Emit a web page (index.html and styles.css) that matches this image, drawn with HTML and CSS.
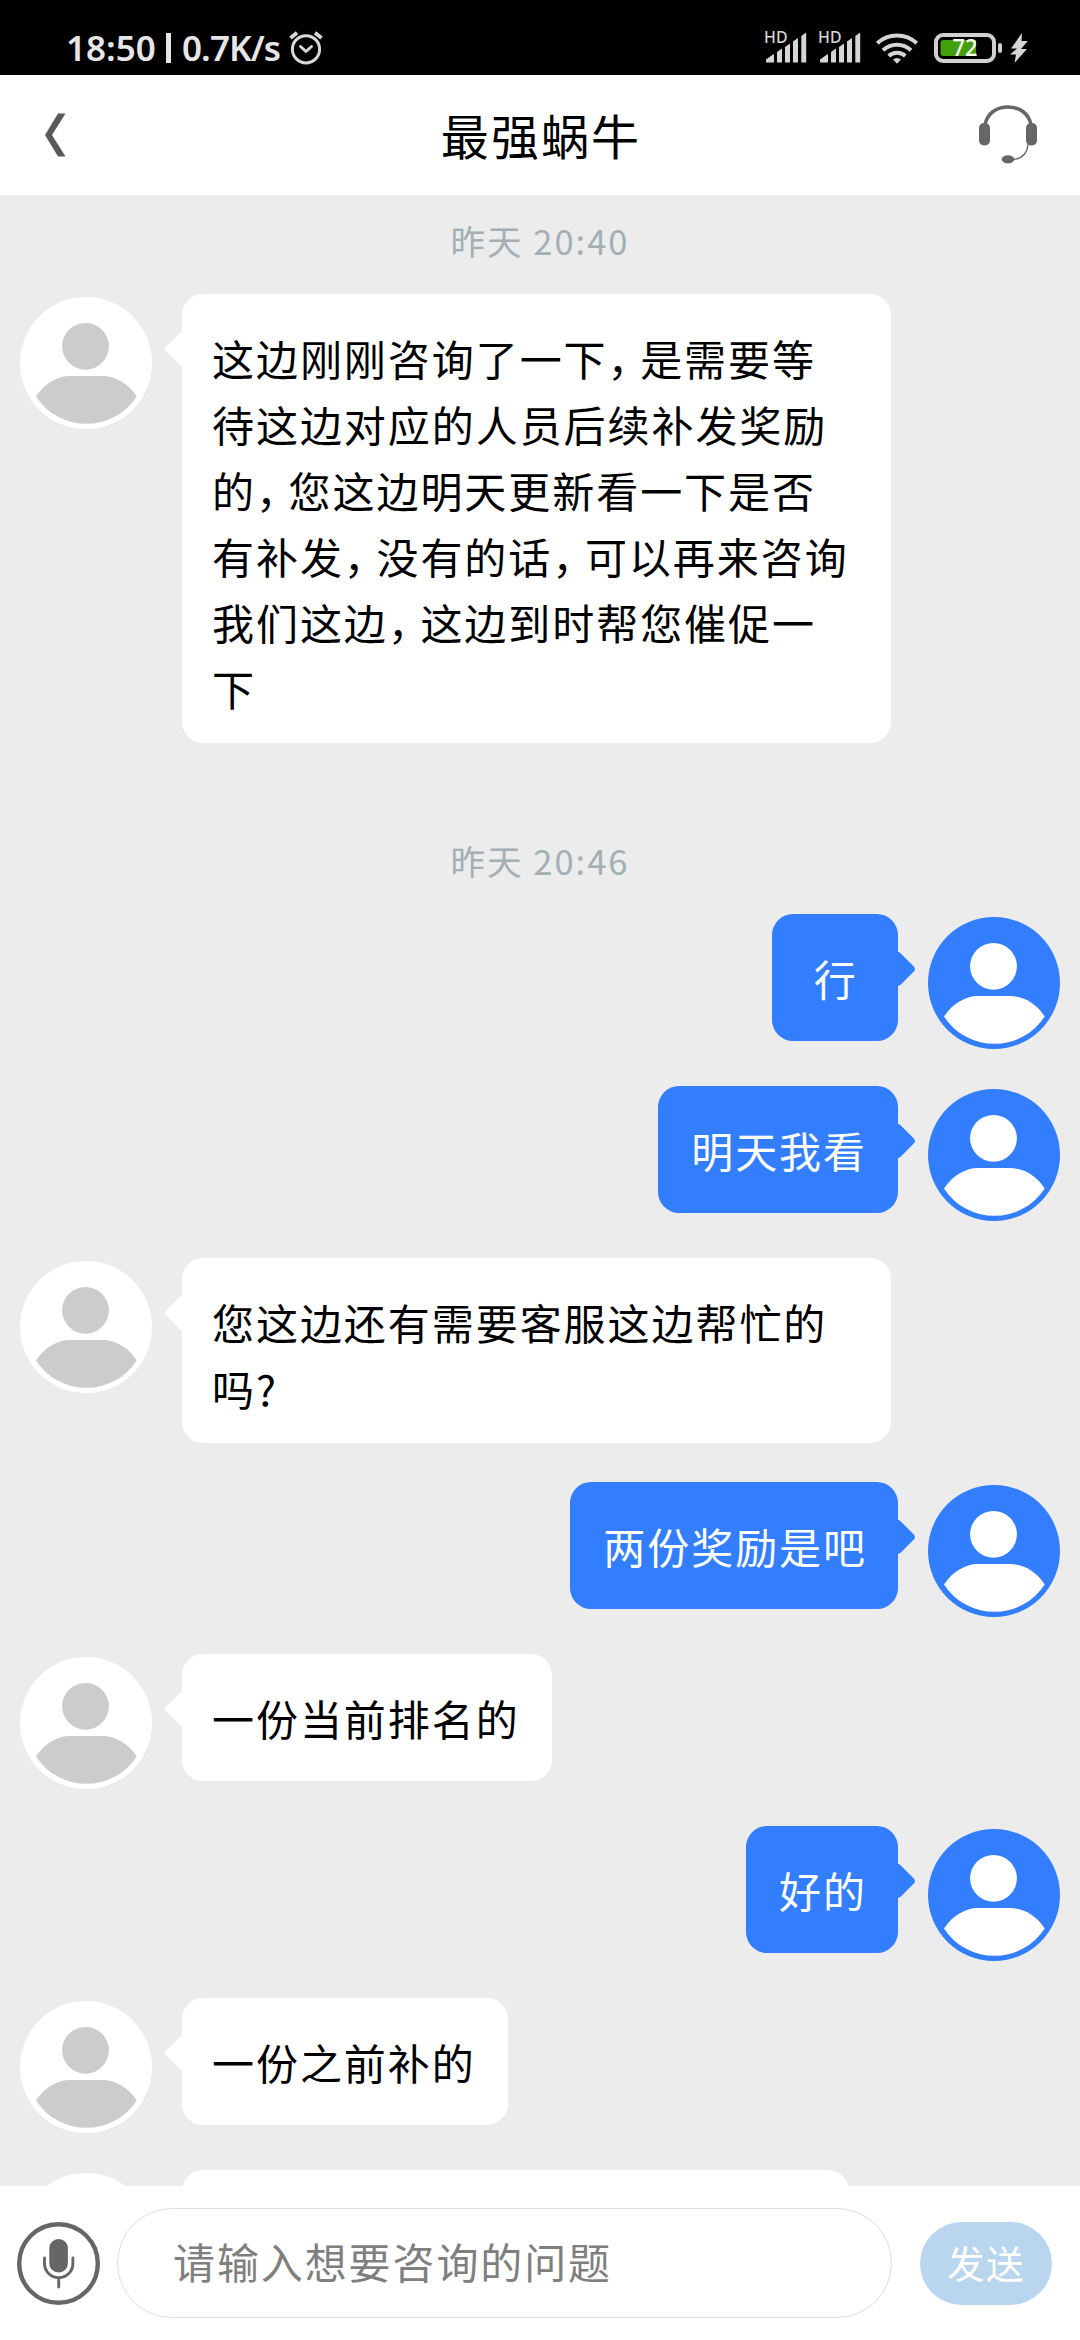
FILE: index.html
```html
<!DOCTYPE html>
<html lang="zh-CN">
<head>
<meta charset="utf-8">
<title>最强蜗牛</title>
<link rel="stylesheet" href="styles.css">
</head>
<body>
<svg class="defs" aria-hidden="true">
  <symbol id="person" viewBox="0 0 132 132">
    <circle cx="65.5" cy="49.3" r="23.4"/>
    <path d="M16 99.5C25 86 38 79 50 79H82C95 79 108 86 116.7 99.5A60 60 0 0 1 16 99.5Z"/>
  </symbol>
</svg>
<div class="screen">
  <div class="status">
    <span class="clock">18:50</span><span class="bar"></span><span class="speed">0.7K/s</span>
    <svg class="alarm" width="36" height="36" viewBox="0 0 36 36" fill="none" stroke="#d8d8d8" stroke-width="3" stroke-linecap="round" stroke-linejoin="round">
      <circle cx="18" cy="19.300" r="13.600"/><path d="M12.500 16.500L18 21.500L23.500 16.500"/><path d="M2.500 8L9 2.800M27 2.800L33.500 8" stroke-width="3.800" stroke-linecap="butt"/>
    </svg>
    <div class="icons">
      <svg class="sig" width="42" height="34" viewBox="0 0 42 34">
        <text x="-1" y="11.8" font-size="15.5" font-weight="500" textLength="23.500" lengthAdjust="spacingAndGlyphs">HD</text>
        <path d="M1 31.500V28.500L8 23.500H9V31.500ZM12 31.500V21L17 17.500V31.500ZM20 31.500V16L25 12.500V31.500ZM28 31.500V10.500L33 7V31.500ZM36.300 31.500V5L41.200 1.500V31.500Z"/>
      </svg>
      <svg class="sig" width="42" height="34" viewBox="0 0 42 34">
        <text x="-1" y="11.8" font-size="15.5" font-weight="500" textLength="23.500" lengthAdjust="spacingAndGlyphs">HD</text>
        <path d="M1 31.500V28.500L8 23.500H9V31.500ZM12 31.500V21L17 17.500V31.500ZM20 31.500V16L25 12.500V31.500ZM28 31.500V10.500L33 7V31.500ZM36.300 31.500V5L41.200 1.500V31.500Z"/>
      </svg>
      <svg class="wifi" width="44" height="34" viewBox="0 0 44 34" fill="none" stroke="#d5d5d5" stroke-width="4">
        <path d="M2.300 12.300A29 29 0 0 1 41.700 12.300M8 19.300A20.500 20.500 0 0 1 36 19.300M13.700 25A12.500 12.500 0 0 1 30.300 25"/>
        <path d="M18 28.500Q22 25.500 26 28.500L22 32.800Z" fill="#d5d5d5" stroke="none"/>
      </svg>
      <svg class="battery" width="70" height="32" viewBox="0 0 70 32">
        <rect x="2" y="3" width="58" height="26" rx="7" fill="none" stroke="#d0d0d0" stroke-width="4"/>
        <path d="M6.500 11a3 3 0 0 1 3-3H42V24H9.500a3 3 0 0 1-3-3Z" fill="#43a00c"/>
        <rect x="64" y="11" width="4" height="10" rx="2" fill="#d0d0d0"/>
        <text x="18.500" y="24.200" font-size="23" font-weight="500" textLength="25" lengthAdjust="spacingAndGlyphs" fill="#fff">72</text>
      </svg>
      <svg class="bolt" width="18" height="32" viewBox="0 0 18 32"><path d="M12 1L1 16.500H7L0 22.500H6L4.500 31L17 17H11L17.800 9H11.500Z" fill="#d5d5d5"/></svg>
    </div>
  </div>

  <header class="header">
    <svg class="back" width="22" height="44" viewBox="0 0 22 44"><path d="M13 .5H20.500L7 22L20.500 43.500H13L0 22Z" fill="#595959"/></svg>
    <h1 class="title">最强蜗牛</h1>
    <svg class="headset" width="58" height="60" viewBox="0 0 58 60" fill="#666">
      <path d="M6 20C8 8 18 2 29 2S50 8 52 20" fill="none" stroke="#666" stroke-width="3.500"/>
      <rect x="0" y="18" width="11" height="22.500" rx="5"/><rect x="47" y="18" width="11" height="22.500" rx="5"/>
      <path d="M49 39C48.500 47 44 54 34 54.500" fill="none" stroke="#666" stroke-width="1.400"/>
      <ellipse cx="29" cy="54.300" rx="6.300" ry="4"/>
    </svg>
  </header>

  <main class="chat">
    <div class="time">昨天 20:40</div>
    <div class="row"><svg class="avatar"><use href="#person"/></svg><div class="bubble">这边刚刚咨询了一下<span class="comma">，</span>是需要等<br>待这边对应的人员后续补发奖励<br>的<span class="comma">，</span>您这边明天更新看一下是否<br>有补发<span class="comma">，</span>没有的话<span class="comma">，</span>可以再来咨询<br>我们这边<span class="comma">，</span>这边到时帮您催促一<br>下</div></div>
    <div class="time later">昨天 20:46</div>
    <div class="row me"><svg class="avatar"><use href="#person"/></svg><div class="bubble">行</div></div>
    <div class="row me"><svg class="avatar"><use href="#person"/></svg><div class="bubble">明天我看</div></div>
    <div class="row"><svg class="avatar"><use href="#person"/></svg><div class="bubble">您这边还有需要客服这边帮忙的<br>吗?</div></div>
    <div class="row me"><svg class="avatar"><use href="#person"/></svg><div class="bubble">两份奖励是吧</div></div>
    <div class="row"><svg class="avatar"><use href="#person"/></svg><div class="bubble">一份当前排名的</div></div>
    <div class="row me"><svg class="avatar"><use href="#person"/></svg><div class="bubble">好的</div></div>
    <div class="row"><svg class="avatar"><use href="#person"/></svg><div class="bubble">一份之前补的</div></div>
    <div class="row"><svg class="avatar"><use href="#person"/></svg><div class="bubble partial"></div></div>
  </main>

  <footer class="composer">
    <svg class="mic" width="83" height="83" viewBox="0 0 83 83" fill="none" stroke="#666">
      <circle cx="41.500" cy="41.500" r="39.300" stroke-width="4.400"/>
      <rect x="32.300" y="17" width="18.600" height="33.500" rx="9" fill="#666" stroke="none"/>
      <path d="M27.500 36V41.500A14.200 14.200 0 0 0 55.900 41.500V36M41.700 56V65" stroke-width="2.900" stroke-linecap="round"/>
    </svg>
    <div class="input">请输入想要咨询的问题</div>
    <div class="send">发送</div>
  </footer>
</div>
</body>
</html>
```

FILE: styles.css
```css
* { box-sizing: border-box; }
body {
  margin: 0;
  font-family: "Noto Sans CJK SC", sans-serif;
  color: #000;
}
.defs { display: none; }
.screen {
  width: 1080px;
  height: 2340px;
  display: flex;
  flex-direction: column;
  overflow: hidden;
  background: #ececec;
}

.status {
  height: 75px;
  flex: none;
  display: flex;
  align-items: center;
  padding: 20px 52px 0 66px;
  background: #000;
  color: #e6e6e6;
  font-family: "Noto Sans", sans-serif;
  font-weight: 600;
  font-size: 35px;
  line-height: 55px;
}
.clock { width: 89px; white-space: nowrap; }
.bar { width: 5px; height: 30px; margin: 0 11px; background: #e6e6e6; }
.speed { width: 100px; white-space: nowrap; letter-spacing: -.900px; }
.alarm { margin-left: 6px; }
.icons { display: flex; align-items: center; margin-left: auto; height: 32px; }
.sig { margin-right: 12px; fill: #d5d5d5; overflow: visible; }
.wifi { margin-left: 2px; }
.battery { margin-left: 15px; }
.bolt { margin-left: 6px; }

.header {
  height: 120px;
  flex: none;
  display: flex;
  align-items: center;
  justify-content: space-between;
  padding: 0 43px 0 45px;
  background: #fff;
}
.title {
  margin: 0 0 2px 21px;
  font-weight: 400;
  font-size: 48px;
  letter-spacing: 2.100px;
  line-height: 70px;
}
.back { margin-right: 15px; }

.chat { flex: 1; min-height: 0; overflow: hidden; }
.time {
  height: 99px;
  line-height: 91px;
  text-align: center;
  font-size: 34.500px;
  letter-spacing: 2px;
  color: #a3afb5;
}
.later { margin-top: 33px; }
.row {
  display: flex;
  align-items: flex-start;
  min-height: 172px;
  padding: 0 20px 39px;
}
.me { flex-direction: row-reverse; }
.avatar {
  width: 132px;
  height: 132px;
  flex: none;
  margin: 3px 30px -4px 0;
  border-radius: 50%;
  background: #fff;
  fill: #ccc;
}
.me .avatar { margin: 3px 0 -4px 30px; background: #327eff; fill: #fff; }
.bubble {
  position: relative;
  min-width: 126.500px;
  min-height: 126.500px;
  padding: 31px 32px 22px 30px;
  border-radius: 21px;
  background: #fff;
  font-size: 42px;
  line-height: 66px;
  letter-spacing: 1.950px;
  white-space: nowrap;
}
.row:not(.me) .bubble:has(br) { width: 709px; }
.me .bubble {
  padding: 31px 31px 22px 33px;
  background: #327eff;
  color: #fff;
  text-align: center;
}
.bubble::before {
  content: "";
  position: absolute;
  top: 42px;
  left: -13px;
  width: 26px;
  height: 26px;
  border-radius: 4px;
  background: inherit;
  transform: rotate(45deg);
}
.me .bubble::before { left: auto; right: -13px; }
.comma { letter-spacing: -9.400px; }
.partial { width: 667px; }

.composer {
  height: 154px;
  flex: none;
  display: flex;
  align-items: center;
  padding: 0 28px 0 17px;
  background: #fff;
}
.input {
  width: 775px;
  height: 110px;
  margin-left: 17px;
  padding-left: 55px;
  border: 1px solid #dedede;
  border-radius: 55px;
  font-size: 42px;
  line-height: 104px;
  letter-spacing: 1.900px;
  color: #7f7f7f;
}
.send {
  width: 132px;
  height: 83px;
  margin-left: auto;
  border-radius: 42px;
  background: #bad6ee;
  color: #fff;
  text-align: center;
  font-size: 37.500px;
  letter-spacing: 1.500px;
  line-height: 80px;
}
```
